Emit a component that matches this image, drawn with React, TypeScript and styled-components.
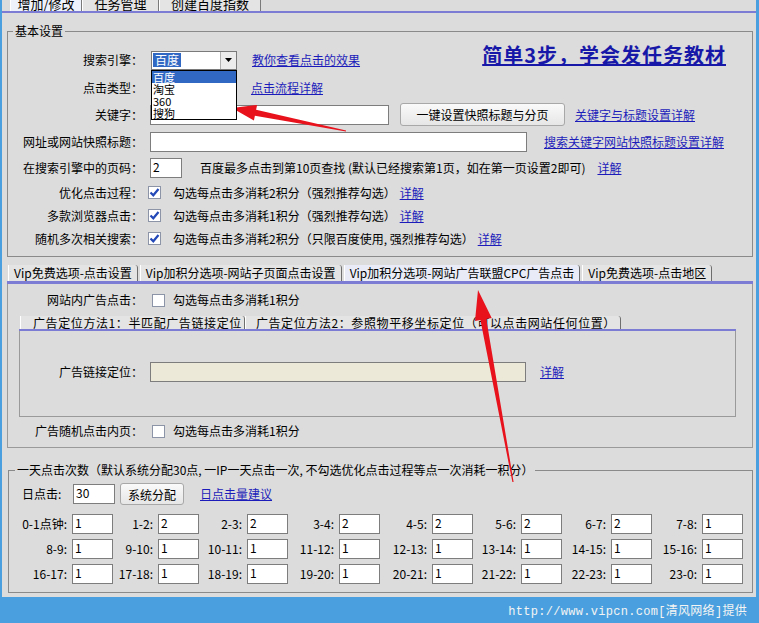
import React from "react"
import styled, { createGlobalStyle } from "styled-components"

const GlobalStyle = createGlobalStyle`
  html, body {
    margin: 0;
    padding: 0;
    background: #4aa0de;
  }
  body {
    font-family: "Noto Sans CJK SC", "Liberation Sans", sans-serif;
    font-size: 12px;
    color: #000;
  }
  * { box-sizing: border-box; }
`

const arrowPoints = (tx: number, ty: number, px: number, py: number, headLen: number, headW: number, shaftW: number) => {
  const dx = px - tx
  const dy = py - ty
  const len = Math.hypot(dx, dy)
  const ux = dx / len
  const uy = dy / len
  const nx = -uy
  const ny = ux
  const bx = px - ux * headLen
  const by = py - uy * headLen
  const pts = [
    [tx + nx * 0.6, ty + ny * 0.6],
    [bx + (nx * shaftW) / 2, by + (ny * shaftW) / 2],
    [bx + (nx * headW) / 2, by + (ny * headW) / 2],
    [px, py],
    [bx - (nx * headW) / 2, by - (ny * headW) / 2],
    [bx - (nx * shaftW) / 2, by - (ny * shaftW) / 2],
    [tx - nx * 0.6, ty - ny * 0.6],
  ]
  return pts.map((p) => p.map((v) => v.toFixed(1)).join(",")).join(" ")
}

const hours = [
  [["0-1点钟:", "1"], ["1-2:", "2"], ["2-3:", "2"], ["3-4:", "2"], ["4-5:", "2"], ["5-6:", "2"], ["6-7:", "2"], ["7-8:", "1"]],
  [["8-9:", "1"], ["9-10:", "1"], ["10-11:", "1"], ["11-12:", "1"], ["12-13:", "1"], ["13-14:", "1"], ["14-15:", "1"], ["15-16:", "1"]],
  [["16-17:", "1"], ["17-18:", "1"], ["18-19:", "1"], ["19-20:", "1"], ["20-21:", "1"], ["21-22:", "1"], ["22-23:", "1"], ["23-0:", "1"]],
]

const CheckMark = ({ on }: { on?: boolean }) => (
  <Check>
    {on && (
      <svg width="11" height="11" viewBox="0 0 11 11">
        <path d="M1.5 5.5 L4.3 8.3 L9.5 2" fill="none" stroke="#2348b8" strokeWidth="2.2" />
      </svg>
    )}
  </Check>
)

const App = () => {
  return (
    <>
      <GlobalStyle />
      <Window>
        <Body>
          <TopTabs>
            <TopTab $active $w={72}><TopTabText>增加/修改</TopTabText></TopTab>
            <TopTab $w={77}><TopTabText>任务管理</TopTabText></TopTab>
            <TopTab $w={102}><TopTabText>创建百度指数</TopTabText></TopTab>
          </TopTabs>
          <PurpleLine $h={2} />

          <Group $mt={11}>
            <GroupLegend>基本设置</GroupLegend>
            <Row $h={28}>
              <Label>搜索引擎：</Label>
              <SelectWrap>
                <SelectBox>
                  <SelectValue>百度</SelectValue>
                  <SelectArrow>
                    <svg width="7" height="4" viewBox="0 0 7 4"><path d="M0 0 H7 L3.5 4 Z" fill="#000" /></svg>
                  </SelectArrow>
                </SelectBox>
                <DropList>
                  <DropItem $active>百度</DropItem>
                  <DropItem>淘宝</DropItem>
                  <DropItem>360</DropItem>
                  <DropItem>搜狗</DropItem>
                </DropList>
              </SelectWrap>
              <Link $ml={15}>教你查看点击的效果</Link>
              <BigLink>简单3步，学会发任务教材</BigLink>
            </Row>
            <Row $h={27}>
              <Label>点击类型：</Label>
              <Link $ml={100}>点击流程详解</Link>
            </Row>
            <Row $h={27}>
              <Label>关键字：</Label>
              <Field $w={239} $ml={-1} readOnly value="" />
              <Button $w={165} $h={23} $ml={11}>一键设置快照标题与分页</Button>
              <Link $ml={10}>关键字与标题设置详解</Link>
            </Row>
            <Row $h={27}>
              <Label>网址或网站快照标题：</Label>
              <Field $w={377} $ml={-1} readOnly value="" />
              <Link $ml={17}>搜索关键字网站快照标题设置详解</Link>
            </Row>
            <Row $h={26}>
              <Label>在搜索引擎中的页码：</Label>
              <Field $w={32} $ml={-1} readOnly value="2" />
              <Note $ml={18}>百度最多点击到第10页查找 (默认已经搜索第1页，如在第一页设置2即可)</Note>
              <Link $ml={12}>详解</Link>
            </Row>
            <Row $h={23}>
              <Label>优化点击过程：</Label>
              <CheckSlot $ml={-3}><CheckMark on /></CheckSlot>
              <Note $ml={12}>勾选每点击多消耗2积分（强烈推荐勾选）</Note>
              <Link $ml={4}>详解</Link>
            </Row>
            <Row $h={23}>
              <Label>多款浏览器点击：</Label>
              <CheckSlot $ml={-3}><CheckMark on /></CheckSlot>
              <Note $ml={12}>勾选每点击多消耗1积分（强烈推荐勾选）</Note>
              <Link $ml={4}>详解</Link>
            </Row>
            <Row $h={23}>
              <Label>随机多次相关搜索：</Label>
              <CheckSlot $ml={-3}><CheckMark on /></CheckSlot>
              <Note $ml={12}>勾选每点击多消耗2积分（只限百度使用, 强烈推荐勾选）</Note>
              <Link $ml={4}>详解</Link>
            </Row>
          </Group>

          <TabControl>
            <TabStrip>
              <TabItem>Vip免费选项-点击设置</TabItem>
              <TabItem>Vip加积分选项-网站子页面点击设置</TabItem>
              <TabItem $active>Vip加积分选项-网站广告联盟CPC广告点击</TabItem>
              <TabItem>Vip免费选项-点击地区</TabItem>
            </TabStrip>
            <PurpleLine $h={3} />
            <TabPanel>
              <Row $h={20}>
                <Label>网站内广告点击：</Label>
                <CheckSlot $ml={1}><CheckMark /></CheckSlot>
                <Note $ml={8}>勾选每点击多消耗1积分</Note>
              </Row>
              <InnerTabs>
                <InnerTabStrip>
                  <InnerTab $pl={12} $pr={2}>广告定位方法1：半匹配广告链接定位</InnerTab>
                  <InnerTab $pl={10} $pr={4}>广告定位方法2：参照物平移坐标定位（可以点击网站任何位置）</InnerTab>
                </InnerTabStrip>
                <PurpleLine $h={2} />
                <InnerPanel>
                  <Row $h={20}>
                    <Label $w={123}>广告链接定位：</Label>
                    <Field $w={376} $ml={-1} $bg="#ece9d9" readOnly value="" />
                    <Link $ml={14}>详解</Link>
                  </Row>
                </InnerPanel>
              </InnerTabs>
              <Row $h={20}>
                <Label>广告随机点击内页：</Label>
                <CheckSlot $ml={1}><CheckMark /></CheckSlot>
                <Note $ml={8}>勾选每点击多消耗1积分</Note>
              </Row>
            </TabPanel>
          </TabControl>

          <Group $mt={15} $ml={6} $pt={6}>
            <GroupLegend $ml={6}>一天点击次数（默认系统分配30点, 一IP一天点击一次, 不勾选优化点击过程等点一次消耗一积分）</GroupLegend>
            <Row $h={22}>
              <DayLabel>日点击:</DayLabel>
              <Field $w={42} readOnly value="30" />
              <Button $w={64} $h={22} $ml={5}>系统分配</Button>
              <Link $ml={16}>日点击量建议</Link>
            </Row>
            <HourGrid>
              {hours.map((row) =>
                row.map(([label, value]) => (
                  <HourCell key={label}>
                    <HourLabel>{label}</HourLabel>
                    <Field $w={41} readOnly value={value} />
                  </HourCell>
                ))
              )}
            </HourGrid>
          </Group>
        </Body>
        <Footer>
          <FooterText>http://www.vipcn.com[清风网络]提供</FooterText>
        </Footer>

        <ArrowLayer width="759" height="623" viewBox="0 0 759 623">
          <polygon points={arrowPoints(346, 131, 232, 108, 24, 16, 6)} fill="#e8121c" />
          <polygon points={arrowPoints(513, 482, 478, 290, 30, 17, 6)} fill="#e8121c" />
        </ArrowLayer>
      </Window>
    </>
  )
}

export default App

const Window = styled.div`
  position: relative;
  width: 759px;
  height: 623px;
  display: flex;
  flex-direction: column;
  background: #4aa0de;
  padding: 0 3px 0 2px;
  overflow: hidden;
`

const Body = styled.div`
  height: 597px;
  flex: none;
  background: #dcdcdc;
  display: flex;
  flex-direction: column;
`

const Footer = styled.div`
  flex: 1;
  display: flex;
  align-items: center;
  justify-content: flex-end;
  padding-right: 9px;
`

const FooterText = styled.span`
  font-family: "Liberation Mono", "Noto Sans CJK SC", monospace;
  font-size: 12px;
  letter-spacing: 0.3px;
  color: #f4f4f4;
`

const TopTabs = styled.div`
  display: flex;
  height: 11px;
  padding-left: 8px;
  overflow: hidden;
`

const TopTab = styled.div<{ $active?: boolean; $w: number }>`
  width: ${(p) => p.$w}px;
  display: flex;
  justify-content: center;
  background: ${(p) => (p.$active ? "#eef2fa" : "#e4e4e4")};
  border-left: 1px solid #ffffff;
  border-right: 1px solid #7a7a7a;
  overflow: hidden;
`

const TopTabText = styled.span`
  font-size: 13px;
  line-height: 13px;
  margin-top: -3px;
  white-space: nowrap;
`

const PurpleLine = styled.div<{ $h: number }>`
  height: ${(p) => p.$h}px;
  background: #7c7cd4;
  flex: none;
`

const Group = styled.fieldset<{ $mt: number; $ml?: number; $pt?: number }>`
  margin: ${(p) => p.$mt}px 3px 0 ${(p) => p.$ml ?? 5}px;
  padding: ${(p) => p.$pt ?? 8}px 0 6px 0;
  border: 1px solid #8a8a8a;
  min-width: 0;
`

const GroupLegend = styled.legend<{ $ml?: number }>`
  margin-left: ${(p) => p.$ml ?? 5}px;
  padding: 0 2px;
  font-size: 12px;
  line-height: 14px;
  white-space: nowrap;
`

const Row = styled.div<{ $h: number }>`
  display: flex;
  align-items: center;
  height: ${(p) => p.$h}px;
  white-space: nowrap;
`

const Label = styled.span<{ $w?: number }>`
  flex: none;
  width: ${(p) => p.$w ?? 135}px;
  margin-right: 8px;
  text-align: right;
  line-height: 14px;
`

const Link = styled.a<{ $ml?: number }>`
  margin-left: ${(p) => p.$ml ?? 0}px;
  color: #1c1cba;
  text-decoration: underline;
  cursor: pointer;
  line-height: 14px;
`

const BigLink = styled.a`
  margin-left: auto;
  margin-right: 26px;
  margin-bottom: 10px;
  font-size: 20px;
  font-weight: 700;
  letter-spacing: 1px;
  line-height: 24px;
  color: #1818a8;
  text-decoration: underline;
  cursor: pointer;
`

const Note = styled.span<{ $ml?: number }>`
  margin-left: ${(p) => p.$ml ?? 0}px;
  line-height: 14px;
`

const Field = styled.input<{ $w: number; $ml?: number; $bg?: string }>`
  flex: none;
  width: ${(p) => p.$w}px;
  height: 20px;
  margin: 0 0 0 ${(p) => p.$ml ?? 0}px;
  padding: 0 2px 3px;
  border: 1px solid #7d7d7d;
  background: ${(p) => p.$bg ?? "#ffffff"};
  font-family: "Noto Sans CJK SC", "Liberation Sans", sans-serif;
  font-size: 12px;
  color: #000;
  outline: none;
`

const Button = styled.button<{ $w: number; $h: number; $ml?: number }>`
  flex: none;
  width: ${(p) => p.$w}px;
  height: ${(p) => p.$h}px;
  margin-left: ${(p) => p.$ml ?? 0}px;
  padding: 0;
  border: 1px solid #a8a8a8;
  border-radius: 3px;
  background: linear-gradient(#fafafa, #e6e6e6);
  font-family: "Noto Sans CJK SC", "Liberation Sans", sans-serif;
  font-size: 12px;
  color: #000;
`

const CheckSlot = styled.span<{ $ml?: number }>`
  display: inline-flex;
  margin-left: ${(p) => p.$ml ?? 0}px;
`

const Check = styled.span`
  width: 13px;
  height: 13px;
  display: inline-flex;
  align-items: center;
  justify-content: center;
  border: 1px solid #8c95a8;
  background: #ffffff;
`

const SelectWrap = styled.div`
  position: relative;
  flex: none;
  width: 86px;
  height: 19px;
`

const SelectBox = styled.div`
  height: 19px;
  display: flex;
  align-items: center;
  border: 1px solid #7a7a7a;
  background: #ffffff;
  padding-left: 1px;
`

const SelectValue = styled.span`
  background: #3168c4;
  color: #ffffff;
  line-height: 14px;
  padding: 0 2px;
`

const SelectArrow = styled.span`
  margin-left: auto;
  width: 16px;
  height: 17px;
  display: flex;
  align-items: center;
  justify-content: center;
  background: #ececec;
  border-left: 1px solid #b0b0b0;
`

const DropList = styled.div`
  position: absolute;
  top: 100%;
  left: 0;
  width: 86px;
  border: 1px solid #000;
  background: #ffffff;
  z-index: 2;
`

const DropItem = styled.div<{ $active?: boolean }>`
  height: 12px;
  font-size: 11px;
  line-height: 12px;
  padding-left: 1px;
  overflow: hidden;
  background: ${(p) => (p.$active ? "#3168c4" : "transparent")};
  color: ${(p) => (p.$active ? "#ffffff" : "#000")};
`

const TabControl = styled.div`
  margin: 8px 3px 0 5px;
`

const TabStrip = styled.div`
  display: flex;
  gap: 2px;
  height: 16px;
  padding-left: 1px;
`

const TabItem = styled.div<{ $active?: boolean }>`
  display: flex;
  align-items: center;
  padding: 0 5px 0 5px;
  background: ${(p) => (p.$active ? "#e9ecf6" : "#e4e4e4")};
  border-left: 1px solid #ffffff;
  border-right: 1px solid #6e6e6e;
  border-top-right-radius: 3px;
  line-height: 14px;
  white-space: nowrap;
`

const TabPanel = styled.div`
  border: 1px solid #9a9a9a;
  border-top: none;
  padding: 6px 0 6px;
`

const InnerTabs = styled.div`
  margin: 6px 16px 4px 11px;
`

const InnerTabStrip = styled.div`
  display: flex;
  height: 13px;
  padding-left: 1px;
`

const InnerTab = styled.div<{ $pl: number; $pr: number }>`
  display: flex;
  align-items: center;
  padding: 0 ${(p) => p.$pr}px 0 ${(p) => p.$pl}px;
  background: #e4e4e4;
  border-left: 1px solid #ffffff;
  border-right: 1px solid #6e6e6e;
  border-top-right-radius: 3px;
  letter-spacing: 0.6px;
  line-height: 13px;
  white-space: nowrap;
`

const InnerPanel = styled.div`
  border: 1px solid #9a9a9a;
  border-top: none;
  padding: 31px 0 34px;
`

const DayLabel = styled.span`
  flex: none;
  width: 64px;
  padding-left: 13px;
  line-height: 14px;
`

const HourGrid = styled.div`
  display: grid;
  grid-template-columns: 97px 86px 89px 92px 93px 89px 90px 91px;
  grid-auto-rows: 25px;
  margin: 6px 0 0 7px;
`

const HourCell = styled.div`
  display: flex;
  align-items: center;
`

const HourLabel = styled.span`
  flex: 1;
  text-align: right;
  padding-right: 5px;
  line-height: 14px;
  white-space: nowrap;
`

const ArrowLayer = styled.svg`
  position: absolute;
  top: 0;
  left: 0;
  pointer-events: none;
`
